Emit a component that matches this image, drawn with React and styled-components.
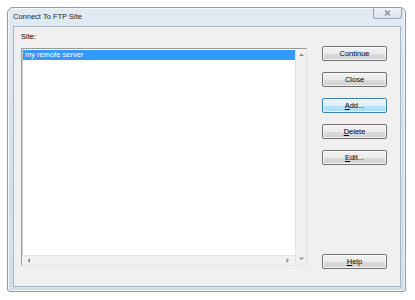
import React from "react";
import styled, { createGlobalStyle } from "styled-components";

const Global = createGlobalStyle`
  html, body { margin: 0; padding: 0; background: #ffffff; }
  body { width: 415px; height: 300px; overflow: hidden; font-family: "Liberation Sans", Arial, sans-serif; }
`;

const Page = styled.div`
  padding: 7px 0 0 7px;
`;

const Window = styled.div`
  width: 399px;
  height: 285px;
  box-sizing: border-box;
  border: 1px solid #8c9aab;
  border-radius: 6px 6px 3px 3px;
  background: linear-gradient(180deg, #e2eaf3 0%, #d8e2ed 40%, #d5dfeb 100%);
  box-shadow: inset 0 0 0 1px rgba(255, 255, 255, 0.7);
  display: flex;
  flex-direction: column;
`;

const TitleBar = styled.div`
  height: 18px;
  display: flex;
  justify-content: space-between;
  align-items: flex-start;
  padding-left: 5px;
`;

const Title = styled.span`
  font-size: 7.5px;
  color: #1e1e1e;
  line-height: 18px;
`;

const CloseBtn = styled.div`
  width: 29px;
  height: 11px;
  margin-right: 3px;
  box-sizing: border-box;
  border: 1px solid #98a6b6;
  border-top: none;
  border-radius: 0 0 3px 3px;
  background: linear-gradient(180deg, #eef2f6 0%, #dde4ec 100%);
  display: flex;
  align-items: center;
  justify-content: center;
`;

const Client = styled.div`
  flex: 1;
  margin: 0 4px 4px 5px;
  border: 1px solid #a9b6c5;
  background: #f0f0f0;
  display: flex;
  font-size: 7.5px;
  color: #000;
`;

const LeftCol = styled.div`
  display: flex;
  flex-direction: column;
  padding: 5px 0 20px 7px;
`;

const Label = styled.div`
  height: 10px;
  line-height: 10px;
  margin-bottom: 6px;
`;

const ListBox = styled.div`
  width: 286px;
  flex: 1;
  box-sizing: border-box;
  border-top: 1px solid #9a9a9a;
  border-left: 1px solid #a0a0a0;
  border-right: 1px solid #e4e4e4;
  border-bottom: 1px solid #e4e4e4;
  background: #ffffff;
  display: grid;
  grid-template-columns: 1fr 11px;
  grid-template-rows: 1fr 10px;
`;

const Items = styled.div`
  padding: 1px 0 0 0;
  border-left: 1px solid #c8c8c8;
`;

const Item = styled.div`
  height: 10px;
  line-height: 10px;
  padding-left: 2px;
  background: ${(p) => (p.$selected ? "#3399ff" : "transparent")};
  color: ${(p) => (p.$selected ? "#ffffff" : "#000")};
`;

const VScroll = styled.div`
  grid-row: 1 / 3;
  grid-column: 2;
  background: #f1f1f1;
  border-left: 1px solid #e2e2e2;
  display: flex;
  flex-direction: column;
  justify-content: space-between;
  align-items: center;
  padding: 4px 0 4px;
`;

const HScroll = styled.div`
  grid-row: 2;
  grid-column: 1;
  background: #f1f1f1;
  border-top: 1px solid #e6e6e6;
  display: flex;
  justify-content: space-between;
  align-items: center;
  padding: 0 5px 0 5px;
`;

const RightCol = styled.div`
  display: flex;
  flex-direction: column;
  gap: 11px;
  padding: 19px 0 17px;
  margin-left: 15px;
`;

const Button = styled.div`
  width: 65px;
  height: 15px;
  box-sizing: border-box;
  border: 1px solid ${(p) => (p.$focused ? "#3c7fb1" : "#707070")};
  border-radius: 2px;
  background: ${(p) =>
    p.$focused
      ? "linear-gradient(180deg, #eaf6fd 0%, #d9f0fc 50%, #bee6fd 51%, #a7d9f5 100%)"
      : "linear-gradient(180deg, #f2f2f2 0%, #ebebeb 50%, #dddddd 51%, #cfcfcf 100%)"};
  box-shadow: inset 0 0 0 1px rgba(255, 255, 255, 0.75);
  display: flex;
  align-items: center;
  justify-content: center;
  line-height: 13px;
  color: #000;
  margin-top: ${(p) => (p.$bottom ? "auto" : "0")};
`;

const Key = styled.span`
  text-decoration: underline;
`;

const Arrow = ({ dir }) => {
  const pts = {
    up: "0,3 5,3 2.5,0.5",
    down: "0,0.5 5,0.5 2.5,3",
    left: "3,0 3,5 0.5,2.5",
    right: "0.5,0 0.5,5 3,2.5",
  }[dir];
  const vertical = dir === "up" || dir === "down";
  return (
    <svg width={vertical ? 5 : 4} height={vertical ? 4 : 5} viewBox={vertical ? "0 0 5 4" : "0 0 4 5"}>
      <polygon points={pts} fill="#8a8a8a" />
    </svg>
  );
};

export default function App() {
  return (
    <>
      <Global />
      <Page>
        <Window>
          <TitleBar>
            <Title>Connect To FTP Site</Title>
            <CloseBtn>
              <svg width="7" height="6" viewBox="0 0 7 6">
                <path d="M1 0.5 L6 5.5 M6 0.5 L1 5.5" stroke="#8a96a3" strokeWidth="1.6" />
              </svg>
            </CloseBtn>
          </TitleBar>
          <Client>
            <LeftCol>
              <Label>Site:</Label>
              <ListBox>
                <Items>
                  <Item $selected>my remote server</Item>
                </Items>
                <VScroll>
                  <Arrow dir="up" />
                  <Arrow dir="down" />
                </VScroll>
                <HScroll>
                  <Arrow dir="left" />
                  <Arrow dir="right" />
                </HScroll>
              </ListBox>
            </LeftCol>
            <RightCol>
              <Button>Continue</Button>
              <Button>Close</Button>
              <Button $focused>
                <span><Key>A</Key>dd...</span>
              </Button>
              <Button>
                <span><Key>D</Key>elete</span>
              </Button>
              <Button>
                <span><Key>E</Key>dit...</span>
              </Button>
              <Button $bottom>
                <span><Key>H</Key>elp</span>
              </Button>
            </RightCol>
          </Client>
        </Window>
      </Page>
    </>
  );
}
